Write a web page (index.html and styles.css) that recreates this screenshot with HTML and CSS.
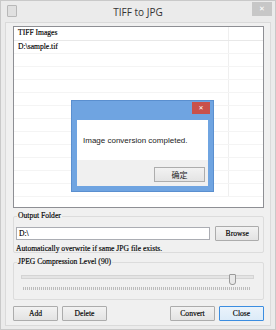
FILE: index.html
```html
<!DOCTYPE html>
<html lang="en">
<head>
    <meta charset="UTF-8">
    <title>TIFF to JPG</title>
    <link rel="stylesheet" href="styles.css">
</head>
<body>

<div class="window">
    <div class="titlebar">
        <span class="app-icon"></span>
        <span class="title">TIFF to JPG</span>
        <span class="close">&#x2715;</span>
    </div>

    <div class="client">
        <div class="list">
            <div class="row head"><span class="cell">TIFF Images</span><span class="cell2"></span></div>
            <div class="row"><span class="cell">D:\sample.tif</span><span class="cell2"></span></div>
            <div class="row"><span class="cell"></span><span class="cell2"></span></div>
            <div class="row"><span class="cell"></span><span class="cell2"></span></div>
            <div class="row"><span class="cell"></span><span class="cell2"></span></div>
            <div class="row"><span class="cell"></span><span class="cell2"></span></div>
            <div class="row"><span class="cell"></span><span class="cell2"></span></div>
            <div class="row"><span class="cell"></span><span class="cell2"></span></div>
            <div class="row"><span class="cell"></span><span class="cell2"></span></div>
            <div class="row"><span class="cell"></span><span class="cell2"></span></div>
            <div class="row"><span class="cell"></span><span class="cell2"></span></div>
            <div class="row"><span class="cell"></span><span class="cell2"></span></div>
            <div class="row"><span class="cell"></span><span class="cell2"></span></div>
        </div>

        <div class="group output">
            <span class="legend">Output Folder</span>
            <div class="folder-row">
                <div class="field">D:\</div>
                <button class="btn browse">Browse</button>
            </div>
            <div class="note">Automatically overwrite if same JPG file exists.</div>
        </div>

        <div class="group level">
            <span class="legend">JPEG Compression Level (90)</span>
            <div class="slider">
                <div class="track"></div>
                <div class="thumb"></div>
            </div>
            <div class="ticks"></div>
        </div>

        <div class="buttons">
            <button class="btn">Add</button>
            <button class="btn">Delete</button>
            <span class="spacer"></span>
            <button class="btn">Convert</button>
            <button class="btn default">Close</button>
        </div>
    </div>

    <div class="dialog">
        <div class="dlg-title"><span class="dlg-close">&#x2715;</span></div>
        <div class="dlg-body">Image conversion completed.</div>
        <div class="dlg-foot"><button class="dlg-btn">确定</button></div>
    </div>
</div>

</body>
</html>
```

FILE: styles.css
```css
body {
    margin: 0;
    background: #ffffff;
}
.window {
    position: relative;
    width: 276px;
    height: 330px;
    box-sizing: border-box;
    background: #ebebeb;
    border: 1px solid #c9c9c9;
    display: flex;
    flex-direction: column;
    font-family: "Liberation Serif", serif;
    font-size: 7.6px;
    color: #000;
    -webkit-text-stroke: 0.15px #000;
}
.titlebar {
    height: 21px;
    display: flex;
    align-items: center;
    position: relative;
}
.app-icon {
    position: absolute;
    left: 6px;
    top: 4px;
    width: 8px;
    height: 10px;
    border: 1px solid #b8b8b8;
    border-radius: 1px;
    background: #e0e0e0;
}
.title {
    flex: 1;
    text-align: center;
    font-family: "Open Sans", "Noto Sans", sans-serif;
    font-size: 10px;
    color: #333;
    -webkit-text-stroke: 0;
}
.close {
    position: absolute;
    right: 3px;
    top: 1px;
    width: 20px;
    height: 14px;
    background: #c7c7c7;
    color: #fff;
    font-family: "DejaVu Sans", sans-serif;
    font-size: 7px;
    line-height: 14px;
    text-align: center;
    -webkit-text-stroke: 0;
}
.client {
    flex: 1;
    margin: 0 4px 3px 4px;
    border: 1px solid #dadada;
    background: #f0f0f0;
    padding: 3px 6px 4px 7px;
    display: flex;
    flex-direction: column;
}
.list {
    height: 182px;
    box-sizing: border-box;
    background: #fff;
    border: 1px solid #8e8f94;
    overflow: hidden;
}
.row {
    display: flex;
    height: 13px;
    border-bottom: 1px solid #f4f4f4;
    box-sizing: border-box;
    line-height: 12px;
}
.row .cell {
    width: 215px;
    padding-left: 4px;
    border-right: 1px solid #efefef;
    box-sizing: border-box;
}
.row.head {
    height: 14px;
    border-bottom: 1px solid #e8e8e8;
}
.group {
    position: relative;
    border: 1px solid #dcdcdc;
    border-radius: 2px;
}
.legend {
    position: absolute;
    left: 3px;
    top: -6px;
    background: #f0f0f0;
    padding: 0 1px;
    line-height: 10px;
}
.output {
    margin-top: 8px;
    height: 37px;
    box-sizing: border-box;
    padding: 9px 4px 0 2px;
}
.folder-row {
    display: flex;
    align-items: center;
}
.field {
    width: 196px;
    height: 13px;
    box-sizing: border-box;
    border: 1px solid #abadb3;
    background: #fff;
    padding-left: 2px;
    line-height: 11px;
}
.btn {
    height: 15px;
    width: 45px;
    padding: 0;
    box-sizing: border-box;
    border: 1px solid #acacac;
    border-radius: 1px;
    background: linear-gradient(#f2f2f2, #e3e3e3);
    font-family: "Liberation Serif", serif;
    font-size: 7.6px;
    color: #000;
    -webkit-text-stroke: 0.15px #000;
}
.browse {
    margin-left: 5px;
    width: 44px;
}
.note {
    margin-top: 3px;
    line-height: 9px;
}
.level {
    margin-top: 9px;
    height: 38px;
    box-sizing: border-box;
    padding: 8px 9px 0 7px;
}
.slider {
    position: relative;
    height: 10px;
}
.track {
    margin-top: 4px;
    height: 2px;
    background: #e4e4e4;
    border: 1px solid #d4d4d4;
}
.thumb {
    position: absolute;
    left: 208px;
    top: -1px;
    width: 5px;
    height: 9px;
    background: #e8e8e8;
    border: 1px solid #9a9a9a;
    border-radius: 1px 1px 3px 3px;
}
.ticks {
    margin: 2px 3px 0 2px;
    height: 3px;
    background: repeating-linear-gradient(90deg, #bbb 0 1px, transparent 1px 2px);
}
.buttons {
    display: flex;
    gap: 4px;
    margin-top: 6px;
}
.spacer {
    flex: 1;
}
.default {
    border-color: #3c8de0;
    background: linear-gradient(#eaf3fb, #dcebf8);
}
.dialog {
    position: absolute;
    left: 70px;
    top: 99px;
    width: 143px;
    height: 92px;
    box-sizing: border-box;
    background: #6fa4e1;
    border: 1px solid #5a8fcf;
    padding: 0 5px 5px 5px;
    display: flex;
    flex-direction: column;
    font-family: "Liberation Sans", sans-serif;
    -webkit-text-stroke: 0;
}
.dlg-title {
    height: 19px;
    position: relative;
}
.dlg-close {
    position: absolute;
    right: -2px;
    top: 1px;
    width: 18px;
    height: 12px;
    background: #c9514b;
    color: #fff;
    font-family: "DejaVu Sans", sans-serif;
    font-size: 6px;
    line-height: 12px;
    text-align: center;
}
.dlg-body {
    height: 40px;
    background: #fff;
    padding-left: 6px;
    line-height: 42px;
    font-size: 8px;
    color: #222;
}
.dlg-foot {
    flex: 1;
    background: #f0f0f0;
    display: flex;
    justify-content: flex-end;
    align-items: center;
    padding-right: 3px;
    padding-top: 2px;
}
.dlg-btn {
    width: 51px;
    height: 15px;
    padding: 0;
    border: 1px solid #adadad;
    background: linear-gradient(#f2f2f2, #e4e4e4);
    font-family: "Noto Sans CJK SC", sans-serif;
    font-size: 8px;
    color: #222;
}
```
